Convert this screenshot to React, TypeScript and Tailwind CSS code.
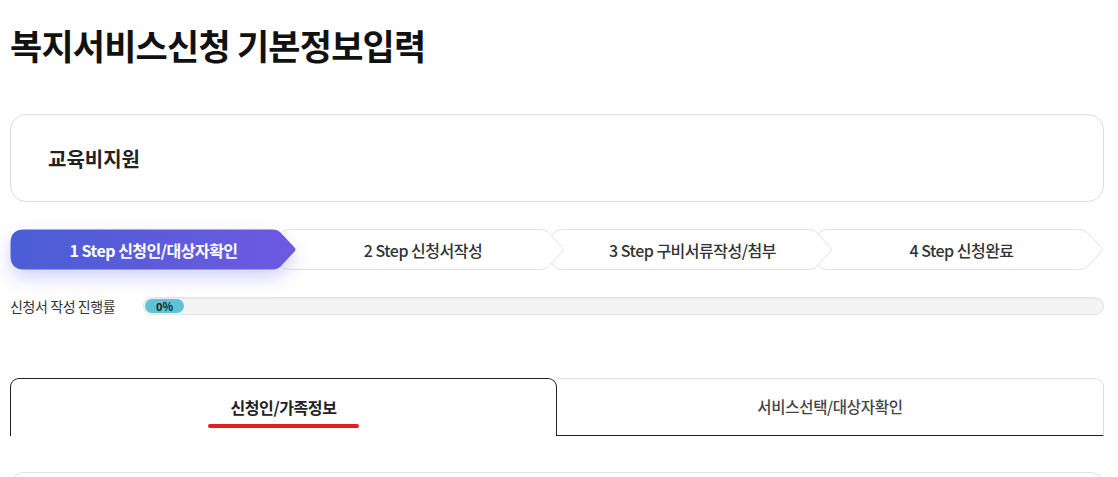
import React from "react";

const font = { fontFamily: '"Noto Sans CJK KR", "Noto Sans", sans-serif' };

function StepShape({ w, first, active }: { w: number; first?: boolean; active?: boolean }) {
  const h = 41;
  const t = 0.5;
  const b = h - 0.5;
  const mid = h / 2;
  const tip = w - 0.5;
  const d = 20;
  let path: string;
  if (first) {
    path = `M 14 ${t} H ${tip - d - 4} Q ${tip - d + 1} ${t} ${tip - d + 4} ${t + 3} L ${tip - 2} ${mid - 2} Q ${tip} ${mid} ${tip - 2} ${mid + 2} L ${tip - d + 4} ${b - 3} Q ${tip - d + 1} ${b} ${tip - d - 4} ${b} H 14 Q ${t} ${b} ${t} ${b - 14} V 14 Q ${t} ${t} 14 ${t} Z`;
  } else {
    const l = 0.5;
    path = `M ${l + d + 4} ${t} H ${tip - d - 4} Q ${tip - d + 1} ${t} ${tip - d + 4} ${t + 3} L ${tip - 2} ${mid - 2} Q ${tip} ${mid} ${tip - 2} ${mid + 2} L ${tip - d + 4} ${b - 3} Q ${tip - d + 1} ${b} ${tip - d - 4} ${b} H ${l + d + 4} Q ${l + d - 1} ${b} ${l + d - 4} ${b - 3} L ${l + 2} ${mid + 2} Q ${l} ${mid} ${l + 2} ${mid - 2} L ${l + d - 4} ${t + 3} Q ${l + d - 1} ${t} ${l + d + 4} ${t} Z`;
  }
  return (
    <svg
      width={w}
      height={h}
      viewBox={`0 0 ${w} ${h}`}
      className={`absolute inset-0 ${active ? "drop-shadow-[0_8px_9px_rgba(95,90,225,0.28)]" : ""}`}
    >
      <defs>
        <linearGradient id="stepgrad" x1="0" y1="0" x2="1" y2="0">
          <stop offset="0%" stopColor="#4a5ed5" />
          <stop offset="100%" stopColor="#6d59e1" />
        </linearGradient>
      </defs>
      {active ? (
        <path d={path} fill="url(#stepgrad)" />
      ) : (
        <path d={path} fill="#ffffff" stroke="#e2e2e2" strokeWidth="1" />
      )}
    </svg>
  );
}

const steps = [
  { label: "1 Step 신청인/대상자확인", w: 287, cls: "w-[287px] z-40", pad: "" },
  { label: "2 Step 신청서작성", w: 300, cls: "w-[300px] -ml-[32px] z-30", pad: "pl-[16px]" },
  { label: "3 Step 구비서류작성/첨부", w: 295, cls: "w-[295px] -ml-[27px] z-20", pad: "pl-[14px]" },
  { label: "4 Step 신청완료", w: 301, cls: "w-[301px] -ml-[30px] z-10", pad: "pl-[16px]" },
];

export default function App() {
  return (
    <div className="w-[1118px] h-[477px] overflow-hidden bg-white text-[#222] pl-[10px] pr-[14px]" style={font}>
      <h1 className="pt-[19px] text-[35px] leading-[52px] font-bold tracking-[-0.8px] text-[#111]">
        복지서비스신청 기본정보입력
      </h1>

      <div className="mt-[43px] h-[88px] rounded-[16px] border border-[#dddddd] flex items-center pl-[37px]">
        <span className="text-[20px] font-bold text-[#222] tracking-[0px] pt-[2px]">교육비지원</span>
      </div>

      <div className="mt-[27px] flex h-[41px]">
        {steps.map((s, i) => (
          <div key={i} className={`relative h-[41px] ${s.cls}`}>
            <StepShape w={s.w} first={i === 0} active={i === 0} />
            <div
              className={`relative flex h-full items-center justify-center text-[16px] tracking-[-0.5px] ${s.pad} ${
                i === 0 ? "text-white font-bold" : "text-[#333] font-medium"
              }`}
            >
              {s.label}
            </div>
          </div>
        ))}
      </div>

      <div className="mt-[27px] flex items-center h-[18px]">
        <div className="w-[133px] text-[14px] text-[#333] tracking-[-0.4px]">신청서 작성 진행률</div>
        <div className="flex-1 h-[18px] rounded-full border border-[#e3e3e3] bg-[#f4f4f4] flex items-center px-[1px] shadow-[inset_0_1px_2px_rgba(0,0,0,0.04)]">
          <div className="w-[39px] h-[14px] rounded-full bg-[#5fc3d6] flex items-center justify-center text-[11px] font-bold text-[#1a1a1a] leading-none">
            0%
          </div>
        </div>
      </div>

      <div className="mt-[63px] flex h-[58px]">
        <div className="w-[547px] rounded-t-[9px] border border-b-0 border-[#222] flex flex-col items-center">
          <div className="mt-[15px] text-[16px] font-bold text-[#222] tracking-[-0.4px] leading-[26px]">
            신청인/가족정보
          </div>
          <div className="mt-[4px] h-[4px] w-[151px] rounded-full bg-[#e31d25]" />
        </div>
        <div className="flex-1 rounded-tr-[9px] border-t border-r border-[#dddddd] border-b border-b-[#222] flex items-center justify-center">
          <span className="text-[15.5px] font-medium text-[#444] tracking-[-0.3px]">서비스선택/대상자확인</span>
        </div>
      </div>

      <div className="mt-[36px] h-[40px] rounded-t-[14px] border border-b-0 border-[#e2e2e2]" />
    </div>
  );
}
